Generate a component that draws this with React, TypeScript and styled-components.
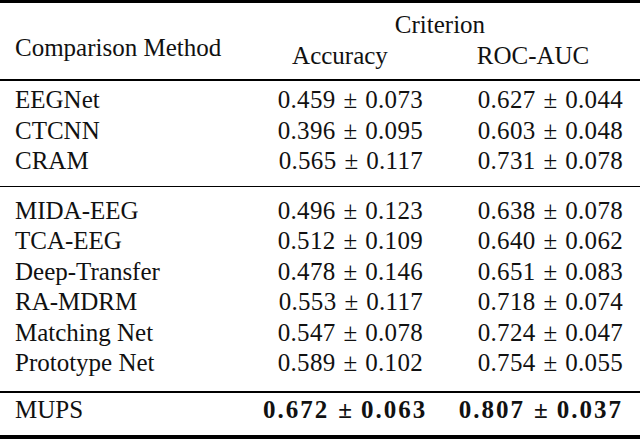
import React from "react";
import styled, { createGlobalStyle } from "styled-components";

const Global = createGlobalStyle`
  html, body { margin: 0; padding: 0; background: #ffffff; }
  body { font-family: "Liberation Serif", "Times New Roman", serif; color: #111; }
`;

const Page = styled.div`
  width: 640px;
  height: 439px;
  overflow: hidden;
  background: #ffffff;
  display: flex;
  flex-direction: column;
  font-size: 25px;
  line-height: 30.5px;
`;

const Rule = styled.div<{ $w: number }>`
  height: ${(p) => p.$w}px;
  background: #000;
  flex: none;
`;

const Header = styled.div`
  display: grid;
  grid-template-columns: 263px 160px 200px;
  grid-template-rows: 31px 31px;
  line-height: 31px;
  padding: 6px 17px 8px 0;
`;

const MethodHead = styled.div`
  grid-row: 1 / 3;
  grid-column: 1;
  align-self: end;
  padding: 0 0 8px 15px;
  white-space: nowrap;
`;

const GroupHead = styled.div`
  grid-row: 1;
  grid-column: 2 / 4;
  text-align: center;
  padding-right: 6px;
`;

const ColHead = styled.div<{ $col: number; $pl: number; $pr: number }>`
  grid-row: 2;
  grid-column: ${(p) => p.$col};
  text-align: center;
  padding-left: ${(p) => p.$pl}px;
  padding-right: ${(p) => p.$pr}px;
  white-space: nowrap;
`;

const Group = styled.div<{ $pt: number; $pb: number }>`
  flex: none;
  padding: ${(p) => p.$pt}px 17px ${(p) => p.$pb}px 0;
`;

const Row = styled.div`
  display: grid;
  grid-template-columns: 263px 160px 200px;
  height: 30.5px;
`;

const Name = styled.div`
  padding-left: 15px;
  white-space: nowrap;
`;

const Num = styled.div<{ $bold?: boolean }>`
  text-align: right;
  white-space: nowrap;
  font-weight: ${(p) => (p.$bold ? 700 : 400)};
  letter-spacing: ${(p) => (p.$bold ? "2px" : "0.3px")};
`;

const Pm = styled.span<{ $bold?: boolean }>`
  display: inline-block;
  letter-spacing: 0;
  margin: 0 ${(p) => (p.$bold ? 9 : 8)}px;
`;

type R = { name: string; acc: [string, string]; auc: [string, string]; bold?: boolean };

const g1: R[] = [
  { name: "EEGNet", acc: ["0.459", "0.073"], auc: ["0.627", "0.044"] },
  { name: "CTCNN", acc: ["0.396", "0.095"], auc: ["0.603", "0.048"] },
  { name: "CRAM", acc: ["0.565", "0.117"], auc: ["0.731", "0.078"] },
];

const g2: R[] = [
  { name: "MIDA-EEG", acc: ["0.496", "0.123"], auc: ["0.638", "0.078"] },
  { name: "TCA-EEG", acc: ["0.512", "0.109"], auc: ["0.640", "0.062"] },
  { name: "Deep-Transfer", acc: ["0.478", "0.146"], auc: ["0.651", "0.083"] },
  { name: "RA-MDRM", acc: ["0.553", "0.117"], auc: ["0.718", "0.074"] },
  { name: "Matching Net", acc: ["0.547", "0.078"], auc: ["0.724", "0.047"] },
  { name: "Prototype Net", acc: ["0.589", "0.102"], auc: ["0.754", "0.055"] },
];

const g3: R[] = [
  { name: "MUPS", acc: ["0.672", "0.063"], auc: ["0.807", "0.037"], bold: true },
];

const Value = ({ v, bold }: { v: [string, string]; bold?: boolean }) => (
  <Num $bold={bold}>
    {v[0]}
    <Pm $bold={bold}>±</Pm>
    {v[1]}
  </Num>
);

const Rows = ({ rows }: { rows: R[] }) => (
  <>
    {rows.map((r) => (
      <Row key={r.name}>
        <Name>{r.name}</Name>
        <Value v={r.acc} bold={r.bold} />
        <Value v={r.auc} bold={r.bold} />
      </Row>
    ))}
  </>
);

export default function App() {
  return (
    <Page>
      <Global />
      <Rule $w={3} />
      <Header>
        <MethodHead>Comparison Method</MethodHead>
        <GroupHead>Criterion</GroupHead>
        <ColHead $col={2} $pl={0} $pr={6}>Accuracy</ColHead>
        <ColHead $col={3} $pl={20} $pr={0}>ROC-AUC</ColHead>
      </Header>
      <Rule $w={2} />
      <Group $pt={4} $pb={9.5}>
        <Rows rows={g1} />
      </Group>
      <Rule $w={1} />
      <Group $pt={8.5} $pb={12.5}>
        <Rows rows={g2} />
      </Group>
      <Rule $w={2} />
      <Group $pt={1.5} $pb={10}>
        <Rows rows={g3} />
      </Group>
      <Rule $w={4} />
    </Page>
  );
}
